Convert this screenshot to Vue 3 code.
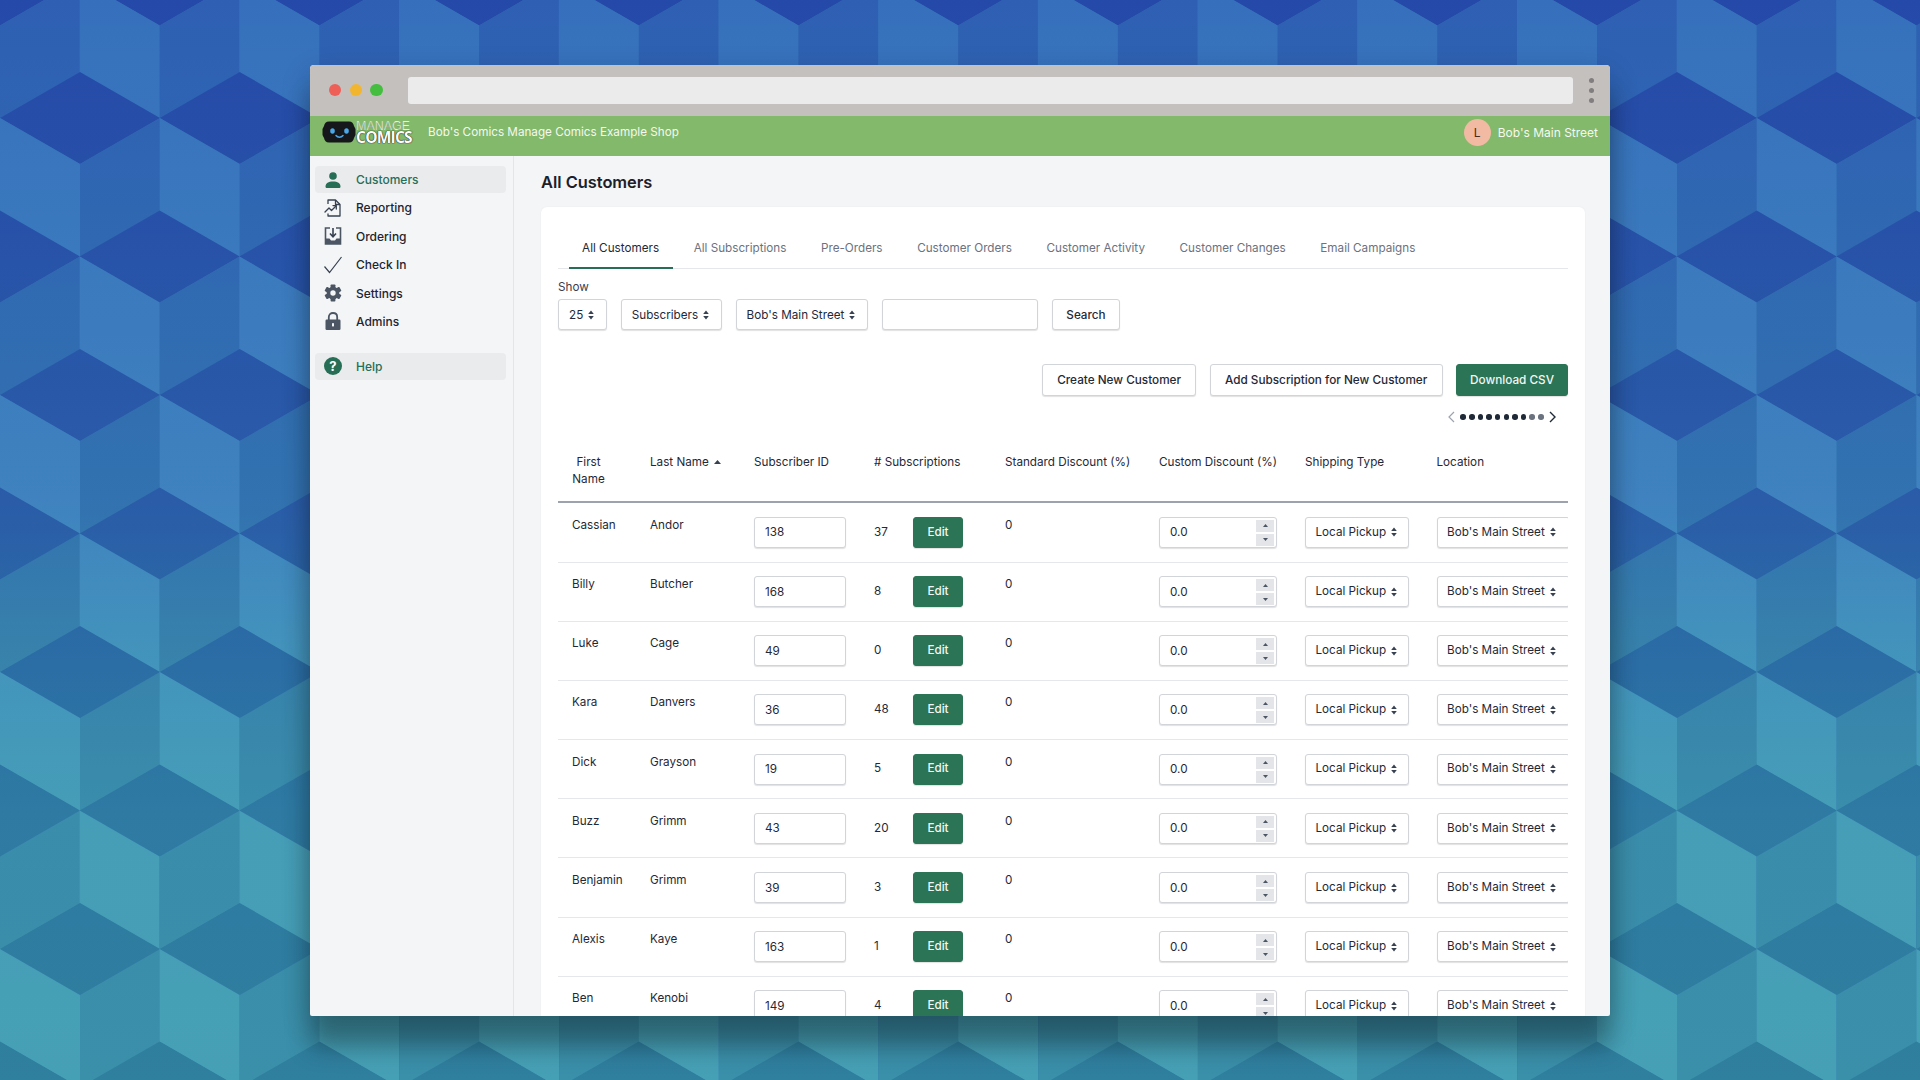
<script setup>
const W = 159.7
const H = 46
const polys = []
for (let r = -1; r < 9; r++) {
  const cy = 118 + (r * 138.5)
  const off = r % 2 === 0 ? 80 : 0
  for (let c = -1; c < 14; c++) {
    const cx = off + c * W
    polys.push({ key: r + '-' + c + 't', fill: 'url(#gt)', pts: `${cx - 80},${cy} ${cx},${cy - H} ${cx + 80},${cy} ${cx},${cy + H}` })
    polys.push({ key: r + '-' + c + 'l', fill: 'url(#gl)', pts: `${cx - 80},${cy} ${cx},${cy + H} ${cx},${cy + 139} ${cx - 80},${cy + 93}` })
    polys.push({ key: r + '-' + c + 'r', fill: 'url(#gd)', pts: `${cx + 80},${cy} ${cx},${cy + H} ${cx},${cy + 139} ${cx + 80},${cy + 93}` })
  }
}
const tabs = ['All Customers', 'All Subscriptions', 'Pre-Orders', 'Customer Orders', 'Customer Activity', 'Customer Changes', 'Email Campaigns']
const nav = [
  { label: 'Customers', icon: 'person', active: true },
  { label: 'Reporting', icon: 'report' },
  { label: 'Ordering', icon: 'order' },
  { label: 'Check In', icon: 'check' },
  { label: 'Settings', icon: 'gear' },
  { label: 'Admins', icon: 'lock' }
]
const heads = ['Subscriber ID', '# Subscriptions', 'Standard Discount (%)', 'Custom Discount (%)', 'Shipping Type', 'Location']
const rows = [
  ['Cassian', 'Andor', 138, 37],
  ['Billy', 'Butcher', 168, 8],
  ['Luke', 'Cage', 49, 0],
  ['Kara', 'Danvers', 36, 48],
  ['Dick', 'Grayson', 19, 5],
  ['Buzz', 'Grimm', 43, 20],
  ['Benjamin', 'Grimm', 39, 3],
  ['Alexis', 'Kaye', 163, 1],
  ['Ben', 'Kenobi', 149, 4]
]
const colWidths = [78, 104, 120, 131, 154, 146, 131.5, 145.5]
const dots = [1, 1, 1, 1, 1, 1, 1, 1, 0, 0]
</script>

<template>
  <div class="desktop">
    <svg class="wallpaper" width="1920" height="1080" viewBox="0 0 1920 1080" aria-hidden="true">
      <defs>
        <linearGradient id="gt" gradientUnits="userSpaceOnUse" x1="0" y1="0" x2="0" y2="1080">
          <stop offset="0" stop-color="#2549a9" />
          <stop offset="0.46" stop-color="#2a5ca8" />
          <stop offset="0.62" stop-color="#2b6ea5" />
          <stop offset="0.75" stop-color="#2e7aa3" />
          <stop offset="1" stop-color="#2f7f9e" />
        </linearGradient>
        <linearGradient id="gl" gradientUnits="userSpaceOnUse" x1="0" y1="0" x2="0" y2="1080">
          <stop offset="0" stop-color="#3670bc" />
          <stop offset="0.46" stop-color="#3f82bf" />
          <stop offset="0.62" stop-color="#4395bc" />
          <stop offset="0.75" stop-color="#459db7" />
          <stop offset="1" stop-color="#46a0b5" />
        </linearGradient>
        <linearGradient id="gd" gradientUnits="userSpaceOnUse" x1="0" y1="0" x2="0" y2="1080">
          <stop offset="0" stop-color="#2e5fb3" />
          <stop offset="0.46" stop-color="#3272b0" />
          <stop offset="0.62" stop-color="#3883ab" />
          <stop offset="0.75" stop-color="#3a8dab" />
          <stop offset="1" stop-color="#3a8fa9" />
        </linearGradient>
      </defs>
      <polygon v-for="p in polys" :key="p.key" :points="p.pts" :fill="p.fill" />
    </svg>

    <div class="window">
      <div class="chrome">
        <div class="lights">
          <span class="light red"></span>
          <span class="light yellow"></span>
          <span class="light green"></span>
        </div>
        <div class="urlbar"></div>
        <div class="kebab"><span></span><span></span><span></span></div>
      </div>

      <header class="topbar">
        <div class="brand">
          <svg class="robot" width="34" height="22" viewBox="0 0 34 22">
            <path d="M7 0.5H27C30 0.5 31.5 2.5 32 5L33.5 8V14L32 17C31.5 19.5 30 21.5 27 21.5H7C4 21.5 2.5 19.5 2 17L0.5 14V8L2 5C2.5 2.5 4 0.5 7 0.5Z" fill="#15171a" />
            <ellipse cx="10.5" cy="10" rx="2.3" ry="2.8" fill="#4aa8e8" />
            <ellipse cx="24.5" cy="10" rx="2.3" ry="2.8" fill="#4aa8e8" />
            <path d="M14 14.5C15.8 16.8 19.2 16.8 21 14.5" stroke="#4aa8e8" stroke-width="1.5" fill="none" stroke-linecap="round" />
          </svg>
          <div class="wordmark">
            <span class="wm-top">MANAGE</span>
            <span class="wm-bottom">COMICS</span>
          </div>
        </div>
        <span class="shop">Bob's Comics Manage Comics Example Shop</span>
        <div class="account">
          <span class="avatar">L</span>
          <span>Bob's Main Street</span>
        </div>
      </header>

      <div class="body">
        <aside class="sidebar">
          <nav class="nav">
            <a v-for="n in nav" :key="n.label" class="nav-item" :class="{ active: n.active }">
              <span class="nav-icon">
                <svg v-if="n.icon === 'person'" width="18" height="18" viewBox="0 0 18 18" fill="#276e56">
                  <circle cx="9" cy="5" r="3.8" />
                  <path d="M1.5 15.5C1.5 12 4.5 10.4 9 10.4S16.5 12 16.5 15.5C16.5 16.6 15.8 17 15 17H3C2.2 17 1.5 16.6 1.5 15.5Z" />
                </svg>
                <svg v-else-if="n.icon === 'report'" width="18" height="18" viewBox="0 0 18 18" fill="none" stroke="#374151" stroke-width="1.3" stroke-linejoin="round">
                  <path d="M4 5V1H11.5L16 5.5V17H4V14.5" />
                  <path d="M11.5 1V5.5H16" />
                  <path d="M1 13L5 9L7.5 11.5L12 7" stroke-linecap="round" />
                  <path d="M9 6.6H12.3V10" stroke-linecap="round" />
                </svg>
                <svg v-else-if="n.icon === 'order'" width="18" height="18" viewBox="0 0 18 18">
                  <path d="M6 1H1.5V17H16.5V1H12" fill="none" stroke="#4b5563" stroke-width="1.6" />
                  <path d="M1.5 11.5H5.5L7 13.5H11L12.5 11.5H16.5V17H1.5Z" fill="#4b5563" />
                  <path d="M9 1V9M6 6.5L9 9.8L12 6.5" fill="none" stroke="#374151" stroke-width="1.6" />
                </svg>
                <svg v-else-if="n.icon === 'check'" width="18" height="18" viewBox="0 0 18 18" fill="none" stroke="#374151" stroke-width="1.2">
                  <path d="M0.5 10.5L5.5 16.5L17.5 1" />
                </svg>
                <svg v-else-if="n.icon === 'gear'" width="18" height="18" viewBox="0 0 18 18" fill="#4b5563">
                  <g>
                    <rect x="6.6" y="0.5" width="4.8" height="17" rx="0.8" />
                    <rect x="6.6" y="0.5" width="4.8" height="17" rx="0.8" transform="rotate(60 9 9)" />
                    <rect x="6.6" y="0.5" width="4.8" height="17" rx="0.8" transform="rotate(120 9 9)" />
                  </g>
                  <circle cx="9" cy="9" r="6.3" />
                  <circle cx="9" cy="9" r="2.7" fill="#f4f5f7" />
                </svg>
                <svg v-else-if="n.icon === 'lock'" width="18" height="18" viewBox="0 0 18 18">
                  <path d="M4.8 8V5.2C4.8 2.6 6.6 1 9 1S13.2 2.6 13.2 5.2V8" fill="none" stroke="#4b5563" stroke-width="1.8" />
                  <rect x="1.5" y="7.5" width="15" height="10.5" rx="1.2" fill="#4b5563" />
                  <rect x="8" y="11.2" width="2" height="3.2" fill="#f4f5f7" />
                </svg>
              </span>
              <span>{{ n.label }}</span>
            </a>
          </nav>
          <a class="nav-item active help">
            <span class="nav-icon"><span class="help-badge">?</span></span>
            <span>Help</span>
          </a>
        </aside>

        <main class="main">
          <h1 class="title">All Customers</h1>
          <section class="card">
            <div class="tabs">
              <a v-for="(t, i) in tabs" :key="t" class="tab" :class="{ on: i === 0 }">{{ t }}</a>
            </div>

            <div class="show-label">Show</div>
            <div class="filters">
              <div class="select">25
                <svg class="updown" width="6" height="10" viewBox="0 0 6 10"><path d="M3 0.5L5.8 4H0.2ZM3 9.5L0.2 6H5.8Z" /></svg>
              </div>
              <div class="select">Subscribers
                <svg class="updown" width="6" height="10" viewBox="0 0 6 10"><path d="M3 0.5L5.8 4H0.2ZM3 9.5L0.2 6H5.8Z" /></svg>
              </div>
              <div class="select">Bob's Main Street
                <svg class="updown" width="6" height="10" viewBox="0 0 6 10"><path d="M3 0.5L5.8 4H0.2ZM3 9.5L0.2 6H5.8Z" /></svg>
              </div>
              <input class="field search-field" />
              <button class="btn search-btn">Search</button>
            </div>

            <div class="actions">
              <button class="btn big">Create New Customer</button>
              <button class="btn big">Add Subscription for New Customer</button>
              <button class="btn big primary">Download CSV</button>
            </div>

            <div class="pager">
              <svg width="7" height="12" viewBox="0 0 7 12" fill="none" stroke="#9ca3af" stroke-width="1.2"><path d="M6 1L1 6L6 11" /></svg>
              <div class="dots">
                <span v-for="(d, i) in dots" :key="i" class="dot" :class="{ dim: !d }"></span>
              </div>
              <svg width="7" height="12" viewBox="0 0 7 12" fill="none" stroke="#1f2937" stroke-width="1.4"><path d="M1 1L6 6L1 11" /></svg>
            </div>

            <div class="table-wrap">
              <table class="table">
                <colgroup>
                  <col v-for="(w, i) in colWidths" :key="i" :style="{ width: w + 'px' }" />
                </colgroup>
                <thead>
                  <tr>
                    <th><div class="first-head">First Name</div></th>
                    <th>Last Name
                      <svg class="sort" width="7" height="4" viewBox="0 0 7 4"><path d="M3.5 0L7 4H0Z" /></svg>
                    </th>
                    <th v-for="h in heads" :key="h">{{ h }}</th>
                  </tr>
                </thead>
                <tbody>
                  <tr v-for="r in rows" :key="r[0] + r[1]">
                    <td>{{ r[0] }}</td>
                    <td>{{ r[1] }}</td>
                    <td><input class="field id-field" :value="r[2]" readonly /></td>
                    <td>
                      <div class="subs">
                        <span class="count">{{ r[3] }}</span>
                        <button class="btn primary edit">Edit</button>
                      </div>
                    </td>
                    <td>0</td>
                    <td>
                      <div class="number">
                        <input class="field num-field" value="0.0" readonly />
                        <span class="spin up"><svg width="5" height="3" viewBox="0 0 5 3"><path d="M2.5 0L5 3H0Z" /></svg></span>
                        <span class="spin down"><svg width="5" height="3" viewBox="0 0 5 3"><path d="M2.5 3L0 0H5Z" /></svg></span>
                      </div>
                    </td>
                    <td>
                      <div class="select cell-ship">Local Pickup
                        <svg class="updown" width="6" height="10" viewBox="0 0 6 10"><path d="M3 0.5L5.8 4H0.2ZM3 9.5L0.2 6H5.8Z" /></svg>
                      </div>
                    </td>
                    <td>
                      <div class="select cell-loc">Bob's Main Street
                        <svg class="updown" width="6" height="10" viewBox="0 0 6 10"><path d="M3 0.5L5.8 4H0.2ZM3 9.5L0.2 6H5.8Z" /></svg>
                      </div>
                    </td>
                  </tr>
                </tbody>
              </table>
            </div>
          </section>
        </main>
      </div>
    </div>
  </div>
</template>

<style scoped>
.desktop {
  position: relative;
  width: 1920px;
  height: 1080px;
  overflow: hidden;
  padding: 65px 310px 0;
  box-sizing: border-box;
  font-family: Inter, "Noto Sans", sans-serif;
  font-size: 11.7px;
  color: #1f2937;
  background: #2e6fb0;
}
.wallpaper {
  position: absolute;
  left: 0;
  top: 0;
}
.window {
  position: relative;
  width: 1300px;
  height: 951px;
  display: flex;
  flex-direction: column;
  border-radius: 4px 4px 2px 2px;
  background: #f4f5f7;
  box-shadow: 0 32px 24px rgba(0, 0, 0, 0.28), 0 10px 30px rgba(0, 0, 0, 0.2);
  overflow: hidden;
}
.chrome {
  flex: none;
  height: 50.5px;
  display: flex;
  align-items: center;
  background: #c4c0be;
  box-sizing: border-box;
  padding: 0 15px 0 19px;
}
.lights {
  display: flex;
  gap: 8.2px;
  width: 79px;
}
.light {
  width: 12.4px;
  height: 12.4px;
  border-radius: 50%;
}
.red { background: #ee5f58; }
.yellow { background: #f2b530; }
.green { background: #45bd3e; }
.urlbar {
  width: 1165px;
  height: 27px;
  background: #ebebeb;
  border-radius: 3px;
}
.kebab {
  margin-left: 15.5px;
  display: flex;
  flex-direction: column;
  gap: 5px;
}
.kebab span {
  width: 5px;
  height: 5px;
  border-radius: 50%;
  background: #807e7e;
}
.topbar {
  flex: none;
  height: 40px;
  box-sizing: border-box;
  display: flex;
  align-items: center;
  background: #82b96a;
  color: #f5f8f0;
  padding: 0 12px 7px;
}
.brand {
  display: flex;
  align-items: center;
  width: 106px;
}
.wordmark {
  display: flex;
  flex-direction: column;
  color: #fff;
}
.wm-top {
  font-family: "Liberation Sans", sans-serif;
  font-size: 12.5px;
  font-weight: 400;
  line-height: 10px;
  color: #eef4e8;
  -webkit-text-stroke: 0.2px #5c7d50;
}
.wm-bottom {
  font-family: "Open Sans", sans-serif;
  font-size: 15.5px;
  font-weight: 700;
  line-height: 13px;
  letter-spacing: -0.75px;
  text-shadow: 0 0 1px #111, 0 0 1px #111;
}
.account {
  margin-left: auto;
  display: flex;
  align-items: center;
  gap: 7px;
  font-size: 12px;
}
.avatar {
  width: 27px;
  height: 27px;
  border-radius: 50%;
  background: #f2b9a3;
  color: #4b2a20;
  display: flex;
  align-items: center;
  justify-content: center;
  font-size: 12px;
}
.body {
  flex: 1;
  min-height: 0;
  display: flex;
}
.sidebar {
  flex: none;
  width: 204px;
  box-sizing: border-box;
  border-right: 1px solid #e3e5e8;
  padding: 10.5px 7px 0 5px;
}
.nav {
  display: flex;
  flex-direction: column;
  gap: 1.4px;
  margin-bottom: 18px;
}
.nav-item {
  height: 27px;
  display: flex;
  align-items: center;
  border-radius: 4px;
  font-size: 12px;
  font-weight: 500;
  color: #1f2430;
}
.nav-item.active {
  background: #eaebed;
  color: #276e56;
}
.nav-icon {
  width: 41px;
  padding-left: 9px;
  box-sizing: border-box;
  display: flex;
  align-items: center;
}
.help-badge {
  width: 18px;
  height: 18px;
  border-radius: 50%;
  background: #276e56;
  color: #fff;
  font-size: 13px;
  font-weight: 700;
  display: flex;
  align-items: center;
  justify-content: center;
}
.main {
  flex: 1;
  min-width: 0;
  padding: 0 25px 0 27px;
  display: flex;
  flex-direction: column;
}
.title {
  margin: 0;
  height: 51.5px;
  line-height: 53px;
  font-size: 16.4px;
  font-weight: 600;
  color: #1a202c;
}
.card {
  flex: 1;
  background: #fff;
  border-radius: 6px 6px 0 0;
  box-shadow: 0 0 2px rgba(0, 0, 0, 0.06);
  padding: 0 17px;
}
.tabs {
  height: 62px;
  box-sizing: border-box;
  display: flex;
  gap: 7.6px;
  padding-left: 10.6px;
  border-bottom: 1px solid #e5e7eb;
}
.tab {
  height: 62px;
  box-sizing: border-box;
  padding: 21px 13.5px 0;
  display: flex;
  align-items: center;
  color: #6b7280;
  border-bottom: 2px solid transparent;
  white-space: nowrap;
}
.tab.on {
  color: #1f2937;
  border-bottom-color: #276e56;
}
.show-label {
  margin-top: 9px;
  line-height: 18px;
  color: #374151;
}
.filters {
  margin-top: 3px;
  display: flex;
  gap: 14px;
}
.select {
  height: 31px;
  box-sizing: border-box;
  display: inline-flex;
  align-items: center;
  gap: 5px;
  padding: 0 11.5px 0 10px;
  background: #fff;
  border: 1px solid #d1d4d9;
  border-radius: 3px;
  box-shadow: 0 1px 1px rgba(0, 0, 0, 0.12);
  white-space: nowrap;
  color: #1f2937;
}
.updown {
  fill: #374151;
  flex: none;
}
.field {
  height: 31px;
  box-sizing: border-box;
  border: 1px solid #d1d4d9;
  border-radius: 3px;
  box-shadow: 0 1px 1px rgba(0, 0, 0, 0.12);
  background: #fff;
  font: inherit;
  color: #1f2937;
  outline: none;
}
.search-field {
  width: 156px;
  padding: 0;
}
.btn {
  height: 31px;
  padding: 0 14.2px;
  box-sizing: border-box;
  background: #fff;
  border: 1px solid #d1d4d9;
  border-radius: 3px;
  box-shadow: 0 1px 1px rgba(0, 0, 0, 0.12);
  font: inherit;
  font-weight: 500;
  color: #1f2937;
  white-space: nowrap;
}
.search-btn {
  padding: 0 13.5px;
}
.btn.primary {
  background: #2b7456;
  border-color: #2b7456;
  color: #f2f7f4;
}
.actions {
  margin-top: 34px;
  display: flex;
  justify-content: flex-end;
  gap: 13.5px;
}
.btn.big {
  height: 32px;
  font-size: 11.75px;
}
.btn.big.primary {
  padding: 0 13px;
}
.pager {
  margin-top: 14px;
  height: 14px;
  display: flex;
  align-items: center;
  justify-content: flex-end;
  gap: 5.5px;
  padding-right: 12px;
}
.dots {
  display: flex;
  gap: 3.13px;
}
.dot {
  width: 5.5px;
  height: 5.5px;
  border-radius: 50%;
  background: #1f2937;
}
.dot.dim {
  background: #6b7280;
}
.table-wrap {
  margin-top: 17px;
  overflow: hidden;
}
.table {
  width: 1010px;
  table-layout: fixed;
  border-collapse: separate;
  border-spacing: 0;
}
th {
  padding: 13px 0 12.5px 14px;
  text-align: left;
  vertical-align: top;
  font-weight: 400;
  line-height: 17.4px;
  color: #1f2937;
  border-bottom: 2px solid #9ca3af;
  white-space: nowrap;
}
.first-head {
  width: 33px;
  white-space: normal;
  text-align: center;
}
.sort {
  fill: #374151;
  margin-left: 2px;
  vertical-align: 2px;
}
td {
  padding: 13.6px 0 13.6px 14px;
  vertical-align: top;
  line-height: 17.4px;
  color: #1f2937;
  border-bottom: 1px solid #e5e7eb;
  white-space: nowrap;
}
.id-field {
  width: 92px;
  padding: 0 10px;
  display: block;
}
.subs {
  display: flex;
  align-items: center;
}
.count {
  width: 39px;
}
.edit {
  width: 50px;
  padding: 0;
}
.number {
  position: relative;
  width: 118px;
}
.num-field {
  width: 118px;
  padding: 0 10px;
  display: block;
}
.spin {
  position: absolute;
  left: 97px;
  width: 18px;
  height: 12px;
  background: #e3e5e8;
  display: flex;
  align-items: center;
  justify-content: center;
  fill: #4b5563;
}
.spin.up { top: 3px; }
.spin.down { top: 17px; }
.cell-ship {
  width: 104px;
  display: flex;
  padding-left: 9.5px;
}
.cell-loc {
  width: 133px;
  display: flex;
  padding-left: 9.5px;
}
</style>
